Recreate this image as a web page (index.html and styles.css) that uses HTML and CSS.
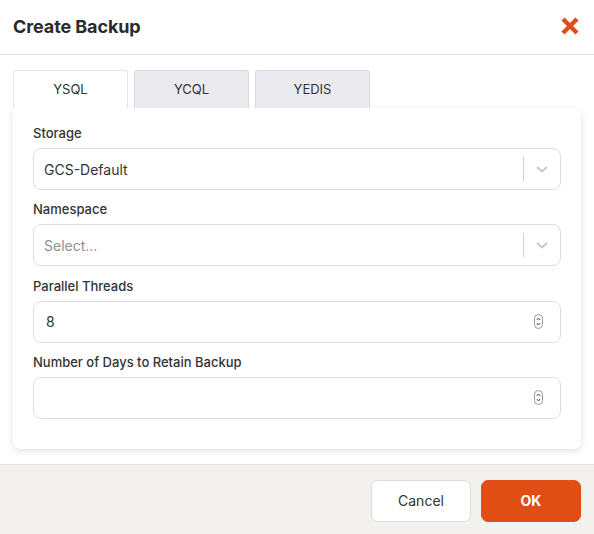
FILE: index.html
```html
<!DOCTYPE html>
<html>
<head>
<meta charset="utf-8">
<link rel="stylesheet" href="styles.css">
</head>
<body>
<div class="modal">
  <div class="modal-header">
    <h1 class="title">Create Backup</h1>
    <button class="close" aria-label="Close">
      <svg width="20" height="20" viewBox="0 0 20 20"><path d="M3 3 L17 17 M17 3 L3 17" stroke="#e04e16" stroke-width="4.4" stroke-linecap="butt"/></svg>
    </button>
  </div>
  <div class="modal-body">
    <div class="tabs">
      <div class="tab active">YSQL</div>
      <div class="tab">YCQL</div>
      <div class="tab">YEDIS</div>
    </div>
    <div class="panel">
      <div class="field">
        <label class="label">Storage</label>
        <div class="control select">
          <span class="value">GCS-Default</span>
          <span class="sep"></span>
          <svg class="chev" width="14" height="10" viewBox="0 0 14 10"><path d="M2 3 L7 7.5 L12 3" fill="none" stroke="#c8c8c8" stroke-width="2"/></svg>
        </div>
      </div>
      <div class="field">
        <label class="label">Namespace</label>
        <div class="control select">
          <span class="value placeholder">Select...</span>
          <span class="sep"></span>
          <svg class="chev" width="14" height="10" viewBox="0 0 14 10"><path d="M2 3 L7 7.5 L12 3" fill="none" stroke="#c8c8c8" stroke-width="2"/></svg>
        </div>
      </div>
      <div class="field">
        <label class="label">Parallel Threads</label>
        <div class="control number">
          <span class="value num">8</span>
          <svg class="spin" width="9" height="15" viewBox="0 0 9 15"><rect x="0.5" y="0.5" width="8" height="14" rx="4" fill="#fff" stroke="#999"/><path d="M2.8 6 L4.5 4 L6.2 6 M2.8 9 L4.5 11 L6.2 9" fill="none" stroke="#444" stroke-width="1"/></svg>
        </div>
      </div>
      <div class="field">
        <label class="label">Number of Days to Retain Backup</label>
        <div class="control number">
          <span class="value num"></span>
          <svg class="spin" width="9" height="15" viewBox="0 0 9 15"><rect x="0.5" y="0.5" width="8" height="14" rx="4" fill="#fff" stroke="#999"/><path d="M2.8 6 L4.5 4 L6.2 6 M2.8 9 L4.5 11 L6.2 9" fill="none" stroke="#444" stroke-width="1"/></svg>
        </div>
      </div>
    </div>
  </div>
  <div class="modal-footer">
    <button class="btn btn-cancel">Cancel</button>
    <button class="btn btn-ok">OK</button>
  </div>
</div>
</body>
</html>
```

FILE: styles.css
```css
* { box-sizing: border-box; }
html, body { margin: 0; padding: 0; }
body {
  font-family: Inter, "Noto Sans", "DejaVu Sans", sans-serif;
  color: #333;
  background: #fff;
  width: 594px;
  height: 534px;
  overflow: hidden;
}
.modal { display: flex; flex-direction: column; height: 534px; }
.modal-header {
  height: 55px;
  border-bottom: 1px solid #e3e3e3;
  display: flex;
  align-items: center;
  justify-content: space-between;
  padding: 0 14px 2px 13px;
}
.title {
  margin: 0;
  font-size: 18px;
  font-weight: 700;
  color: #2b2b2b;
  letter-spacing: -0.1px;
}
.close {
  background: none;
  border: 0;
  padding: 0;
  width: 20px;
  height: 20px;
  display: flex;
}
.modal-body {
  padding: 15px 13px 15px 13px;
}
.tabs {
  display: flex;
  gap: 6px;
  height: 38px;
  position: relative;
  z-index: 2;
}
.tab {
  width: 115px;
  height: 38px;
  display: flex;
  align-items: center;
  justify-content: center;
  font-size: 13px;
  color: #333;
  background: #ebebef;
  border: 1px solid #d9d9de;
  border-bottom: 0;
  border-radius: 3px 3px 0 0;
  padding-bottom: 1px;
}
.tab.active {
  background: #fff;
  border-color: #e4e4e4;
}
.panel {
  background: #fff;
  border-radius: 0 6px 7px 7px;
  box-shadow: 0 2px 7px rgba(0,0,0,0.12);
  padding: 17px 20px 20px 20px;
  height: 341px;
}
.field { margin-bottom: 11.33px; }
.label {
  display: block;
  font-size: 13px;
  font-weight: 500;
  line-height: 17px;
  color: #333;
  margin-bottom: 6px;
}
.control {
  height: 42px;
  border: 1px solid #dedede;
  border-radius: 8px;
  display: flex;
  align-items: center;
  background: #fff;
}
.value {
  flex: 1;
  font-size: 14px;
  color: #333;
  padding-left: 10px;
}
.value.num { padding-left: 12px; }
.placeholder { color: #8f8f8f; }
.sep {
  width: 1px;
  height: 24px;
  background: #d0d0d0;
}
.chev { margin: 0 11px 0 11px; }
.spin { margin-right: 17px; }
.modal-footer {
  margin-top: auto;
  height: 70px;
  background: #f2f1ed;
  border-top: 1px solid #e3e3e3;
  display: flex;
  justify-content: flex-end;
  align-items: center;
  gap: 10px;
  padding: 2px 13px 0 0;
}
.btn {
  width: 100px;
  height: 42px;
  border-radius: 7px;
  font-family: Inter, "Noto Sans", sans-serif;
  font-size: 14px;
}
.btn-cancel {
  background: #fff;
  border: 1px solid #dcdcdc;
  color: #333;
}
.btn-ok {
  background: #e04e16;
  border: 1px solid #e04e16;
  color: #fff;
  font-weight: 700;
}
```
